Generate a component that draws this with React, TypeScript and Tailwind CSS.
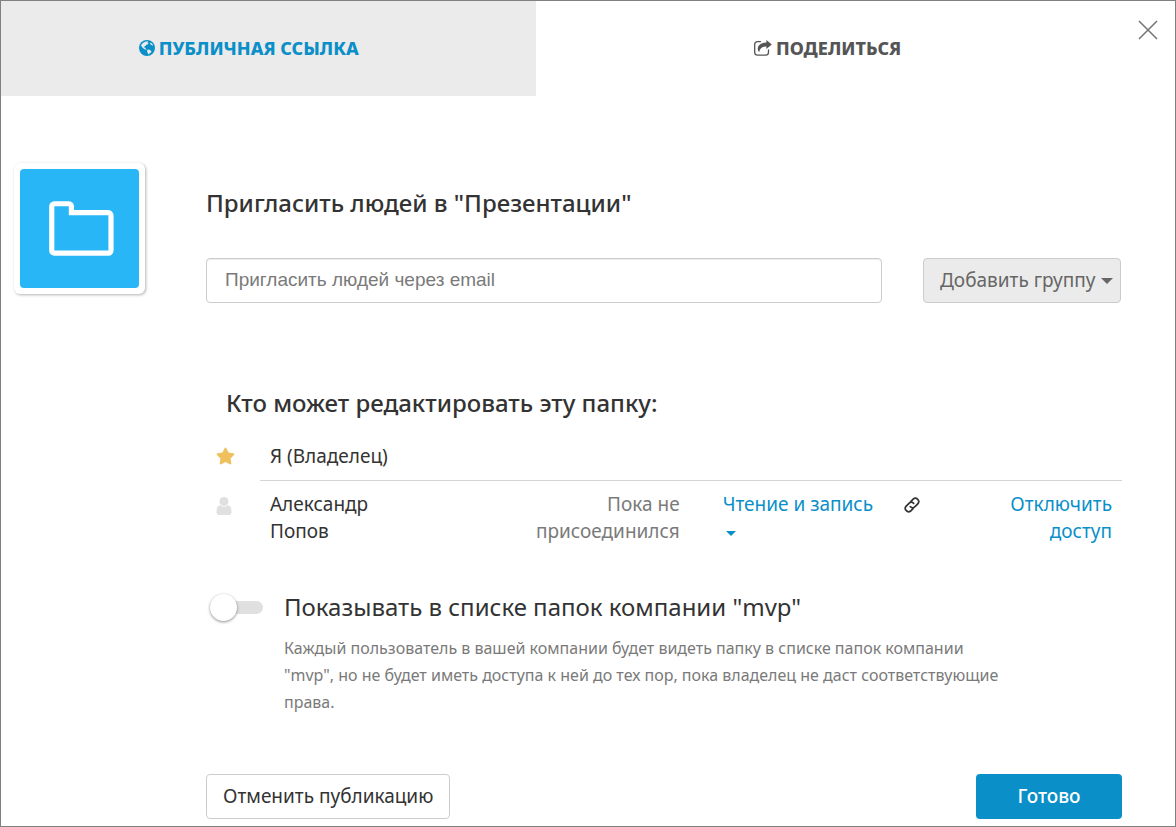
import { useState } from 'react';
import type { ReactNode } from 'react';
import { FaStar } from 'react-icons/fa';

// --- Icons ---

function GlobeIcon() {
  return (
    <svg className="w-4 h-4" viewBox="0 0 16 16" fill="none" aria-hidden="true">
      <circle cx="8" cy="8" r="8" fill="#0a8fc9" />
      <path
        d="M1.800 5.400L3.600 3.200L5.600 2L7.200 1.600L8.600 1.200L9.400 2.200L8.200 2.700L9.600 3.400L8.800 4.400L7.600 4.600L6.600 5.800L5.400 6.400L5.200 7.400L6.400 7.700L6.600 8.800L7.600 9.200L7.400 9.800L5.600 9.200L3.600 7.800L2.600 6.200Z"
        fill="#ebebeb"
      />
      <path d="M8.400 9.800L10 9.600L12.400 11L12 12.400L10.400 13.600L9.200 14.600L8.800 13L8 11.400Z" fill="#ebebeb" />
      <path d="M11.200 2.400L13.200 3.800L14.200 5.600L13.200 5.600L12 4.800L11 3.600Z" fill="#ebebeb" />
    </svg>
  );
}

function ShareIcon() {
  return (
    <svg className="w-[18px] h-4" viewBox="0 0 18 16" fill="none" aria-hidden="true">
      <path
        d="M6.5 1.6H3.6A2.9 2.9 0 0 0 .7 4.5V12.3A2.9 2.9 0 0 0 3.6 15.2H11.6A2.9 2.9 0 0 0 14.5 12.3V10"
        stroke="#555555"
        strokeWidth="1.3"
        strokeLinecap="round"
      />
      <path
        d="M12.4 0L17.8 4.5L12.4 9V6.6C8.6 6.5 6.3 7.4 5.2 12C2.8 10.5 2.4 2.8 12.4 2.5Z"
        fill="#555555"
      />
    </svg>
  );
}

function CloseIcon() {
  return (
    <svg className="w-5 h-5" viewBox="0 0 20 20" aria-hidden="true">
      <path d="M1 1L19 19M19 1L1 19" stroke="#777777" strokeWidth="1.6" />
    </svg>
  );
}

function FolderIcon() {
  return (
    <svg className="w-[65px] h-[55px]" viewBox="0 0 65 55" fill="none" aria-hidden="true">
      <path
        d="M2.75 5.2A2.5 2.5 0 0 1 5.2 2.75H20A2.5 2.5 0 0 1 22.4 5.2V11.6H59.3A2.8 2.8 0 0 1 62 14.4V49.6A2.6 2.6 0 0 1 59.4 52.2H5.4A2.6 2.6 0 0 1 2.75 49.6Z"
        stroke="white"
        strokeWidth="5.2"
      />
    </svg>
  );
}

function UserIcon() {
  return (
    <svg className="w-4 h-[18px]" viewBox="0 0 1280 1536" fill="#e0e0e0" aria-hidden="true">
      <path d="M1280 1271q0 109-62.500 187t-150.500 78h-854q-88 0-150.500-78t-62.500-187q0-85 8.500-160.500t31.500-152 58.500-131 94-89 134.500-34.500q131 128 313 128t313-128q76 0 134.500 34.500t94 89 58.500 131 31.500 152 8.500 160.500z" />
      <circle cx="640" cy="384" r="384" />
    </svg>
  );
}

function LinkIcon() {
  return (
    <svg className="w-4 h-4" viewBox="0 0 24 24" fill="none" stroke="#333333" strokeWidth="2.6" strokeLinecap="round" aria-hidden="true">
      <path d="M9.500 14.500a5 5 0 0 0 7 0l4.500-4.500a5 5 0 0 0-7-7l-3.500 3.500" />
      <path d="M14.500 9.500a5 5 0 0 0-7 0l-4.500 4.500a5 5 0 0 0 7 7l3.500-3.500" />
    </svg>
  );
}

function Caret({ className }: { className: string }) {
  return (
    <svg className={className} viewBox="0 0 12 6" fill="currentColor" aria-hidden="true">
      <path d="M0 0H12L6 6Z" />
    </svg>
  );
}

// --- Tabs ---

interface TabProps {
  active: boolean;
  className: string;
  onClick: () => void;
  children: ReactNode;
}

function Tab({ active, className, onClick, children }: TabProps) {
  return (
    <button
      role="tab"
      aria-selected={active}
      onClick={onClick}
      className={`flex items-center justify-center gap-1 h-[95px] pb-0.5 text-lg font-extrabold uppercase cursor-pointer ${className}`}
    >
      {children}
    </button>
  );
}

export default function App() {
  const [tab, setTab] = useState('share');
  const [listed, setListed] = useState(false);

  return (
    <div className="relative min-h-screen border border-[#808080] bg-white font-['Noto_Sans',sans-serif] text-[19px] text-[#333333]">
      <div role="tablist" className="flex">
        <Tab
          active={tab === 'public'}
          onClick={() => setTab('public')}
          className="w-[45.600%] pr-10 bg-[#ebebeb] text-[#0a8fc9]"
        >
          <GlobeIcon />
          Публичная ссылка
        </Tab>
        <Tab active={tab === 'share'} onClick={() => setTab('share')} className="flex-1 pr-14 text-[#555555]">
          <ShareIcon />
          Поделиться
        </Tab>
      </div>
      <button aria-label="Закрыть" className="absolute top-[19px] right-[17px] cursor-pointer">
        <CloseIcon />
      </button>

      <div className="flex items-start gap-[61px] pl-[13px] pr-[53px] pt-[67px] pb-[7px]">
        <div className="shrink-0 p-[6px] rounded-md bg-white shadow-[1px_1px_3px_rgba(0,0,0,0.3)]">
          <div className="flex items-center justify-center w-[119px] h-[119px] pl-1 rounded bg-[#29b6f6]">
            <FolderIcon />
          </div>
        </div>

        <div className="flex-1 min-w-0">
          <h2 className="mt-[22px] text-2xl leading-9 font-medium">Пригласить людей в "Презентации"</h2>

          <div className="flex gap-[41px] mt-[37px] pr-px">
            <input
              type="email"
              aria-label="Пригласить людей через email"
              placeholder="Пригласить людей через email"
              className="flex-1 min-w-0 h-[45px] px-[18px] pb-0.5 rounded border border-[#cccccc] shadow-[inset_0_1px_1px_rgba(0,0,0,0.075)] font-['Liberation_Sans',sans-serif] placeholder:text-[#7a7a7a]"
            />
            <div className="relative w-[198px] text-[#666666]">
              <select
                aria-label="Добавить группу"
                className="appearance-none w-full h-[45px] pl-4 rounded border border-[#cccccc] bg-[#ebebeb]"
              >
                <option>Добавить группу</option>
              </select>
              <Caret className="absolute right-2 top-5 w-3 h-[6px] pointer-events-none" />
            </div>
          </div>

          <h2 className="mt-[82px] ml-5 text-2xl leading-9 font-medium">Кто может редактировать эту папку:</h2>

          <table className="w-full mt-3 table-fixed leading-[27px]">
            <colgroup>
              <col className="w-[54px]" />
              <col className="w-[22%]" />
              <col className="w-[26%]" />
              <col className="w-[182px]" />
              <col className="w-[60px]" />
              <col />
            </colgroup>
            <tbody>
              <tr>
                <td className="pl-[10px] pb-0.5">
                  <FaStar className="w-[19px] h-[18px] text-[#eec05e]" aria-hidden="true" />
                </td>
                <td colSpan={5} className="px-[10px] py-[10px] border-b border-[#d5d5d5]">
                  Я (Владелец)
                </td>
              </tr>
              <tr className="align-top">
                <td className="pl-[10px] pt-4">
                  <UserIcon />
                </td>
                <td className="px-[10px] py-[10px]">
                  Александр
                  <br />
                  Попов
                </td>
                <td className="pl-[10px] pr-5 py-[10px] text-right text-[#7a7a7a]">Пока не присоединился</td>
                <td className="py-[10px] pl-[23px] text-[#0a8fc9]">
                  <label className="block">
                    <select aria-label="Права доступа" className="appearance-none block w-full h-[27px] cursor-pointer">
                      <option>Чтение и запись</option>
                    </select>
                    <span className="flex items-center h-[27px] pt-1 pl-[3px]">
                      <Caret className="w-[10px] h-[5px]" />
                    </span>
                  </label>
                </td>
                <td className="py-4 pl-[22px]">
                  <button aria-label="Скопировать ссылку" className="block cursor-pointer">
                    <LinkIcon />
                  </button>
                </td>
                <td className="py-[10px] pr-[10px] text-right">
                  <a href="#revoke" className="text-[#0a8fc9]">
                    Отключить
                    <br />
                    доступ
                  </a>
                </td>
              </tr>
            </tbody>
          </table>

          <div className="flex gap-[21px] mt-[34px] pl-[5px]">
            <input
              id="listed"
              type="checkbox"
              role="switch"
              checked={listed}
              onChange={e => setListed(e.target.checked)}
              className="relative appearance-none shrink-0 w-[52px] h-[13px] mt-3 rounded-full bg-[#e0e0e0] cursor-pointer before:absolute before:-left-px before:-top-[7px] before:w-[27px] before:h-[27px] before:rounded-full before:bg-white before:shadow-[0_1px_3px_rgba(0,0,0,0.45)] checked:bg-[#0a8fc9] checked:before:left-[26px]"
            />
            <div>
              <label htmlFor="listed" className="block text-2xl leading-9 cursor-pointer">
                Показывать в списке папок компании "mvp"
              </label>
              <p className="max-w-[728px] mt-[10px] text-base leading-[27px] text-[#7a7a7a]">
                Каждый пользователь в вашей компании будет видеть папку в списке папок компании "mvp", но не будет
                иметь доступа к ней до тех пор, пока владелец не даст соответствующие права.
              </p>
            </div>
          </div>

          <div className="flex justify-between mt-[58px]">
            <button className="h-[45px] px-4 rounded border border-[#cccccc] bg-white cursor-pointer">
              Отменить публикацию
            </button>
            <button className="w-[146px] h-[45px] rounded bg-[#0a8fc9] font-medium text-white cursor-pointer">
              Готово
            </button>
          </div>
        </div>
      </div>
    </div>
  );
}
